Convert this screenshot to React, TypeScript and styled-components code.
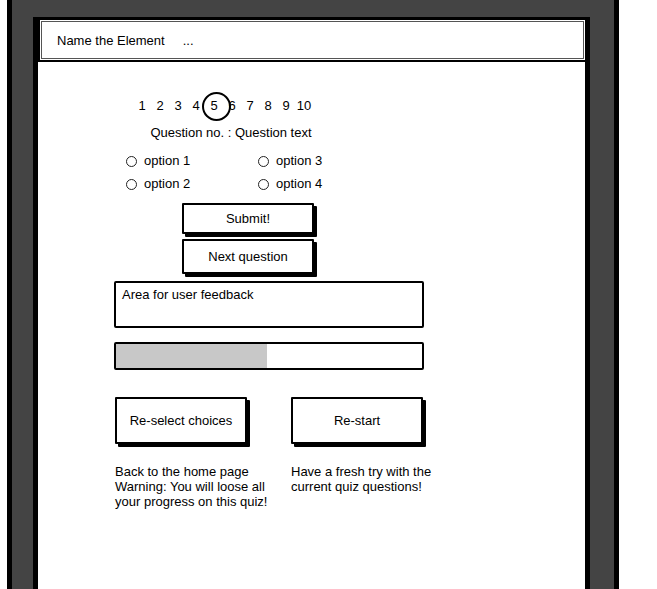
import React from "react";
import styled, { createGlobalStyle } from "styled-components";

const GlobalStyle = createGlobalStyle`
  html, body {
    margin: 0;
    padding: 0;
    background: #ffffff;
    overflow: hidden;
  }
  body {
    font-family: "Liberation Sans", Arial, sans-serif;
    font-size: 13px;
    color: #000;
  }
`;

const Device = styled.div`
  margin-left: 7px;
  width: 612px;
  height: 589px;
  box-sizing: border-box;
  border-left: 5px solid #000;
  border-right: 5px solid #000;
  background: #444444;
  padding: 17px 24px 0 21px;
`;

const Screen = styled.div`
  height: 100%;
  box-sizing: border-box;
  background: #ffffff;
  border-left: 5px solid #000;
  border-right: 5px solid #000;
  border-top: 1px solid #000;
  display: flex;
  flex-direction: column;
`;

const Header = styled.div`
  height: 44px;
  margin-right: -2px;
  box-sizing: border-box;
  border: 2px solid #000;
  box-shadow: inset 0 0 0 1px #fff, inset 0 0 0 2px #555;
  display: flex;
  align-items: center;
  gap: 18px;
  padding-left: 17px;
  font-size: 13px;
  background: #fff;
`;

const Main = styled.div`
  display: flex;
  flex-direction: column;
  align-items: flex-start;
  padding-left: 77px;
`;

const Pager = styled.div`
  display: flex;
  margin-top: 35px;
  margin-left: 18px;
  height: 18px;
  align-items: center;
`;

const PageNum = styled.span`
  position: relative;
  width: 18px;
  text-align: center;
  font-size: 13px;
  line-height: 18px;
`;

const Ring = styled.span`
  position: absolute;
  left: 50%;
  top: 50%;
  width: 25px;
  height: 25px;
  margin-left: -12px;
  margin-top: -14px;
  border: 2px solid #000;
  border-radius: 50%;
  pointer-events: none;
`;

const Question = styled.div`
  margin-top: 10px;
  width: 232px;
  text-align: center;
  line-height: 16px;
`;

const Options = styled.div`
  margin-top: 10px;
  margin-left: 11px;
  display: grid;
  grid-template-columns: 132px 132px;
  grid-auto-flow: column;
  grid-template-rows: 20px 20px;
  row-gap: 3px;
`;

const Option = styled.label`
  display: flex;
  align-items: center;
  gap: 7px;
  line-height: 20px;
`;

const Radio = styled.span`
  width: 9px;
  height: 9px;
  border: 1.4px solid #222;
  border-radius: 50%;
  display: inline-block;
`;

const SketchButton = styled.div<{ $h: number; $mt: number; $ml: number }>`
  box-sizing: border-box;
  width: 132px;
  height: ${(p) => p.$h}px;
  margin-top: ${(p) => p.$mt}px;
  margin-left: ${(p) => p.$ml}px;
  border: 2px solid #000;
  border-radius: 1px;
  box-shadow: 3px 3px 0 #000;
  background: #fff;
  display: flex;
  align-items: center;
  justify-content: center;
  font-size: 13px;
`;

const Feedback = styled.div`
  box-sizing: border-box;
  margin-top: 7px;
  width: 310px;
  margin-left: -1px;
  height: 47px;
  border: 2px solid #000;
  border-radius: 2px;
  padding: 4px 6px;
  line-height: 16px;
`;

const Progress = styled.div`
  box-sizing: border-box;
  margin-top: 14px;
  width: 310px;
  margin-left: -1px;
  height: 28px;
  border: 2px solid #000;
  border-radius: 2px;
  background: #fff;
  display: flex;
`;

const ProgressFill = styled.div`
  height: 100%;
  background: #c8c8c8;
`;

const ButtonRow = styled.div`
  margin-top: 27px;
  display: flex;
  gap: 44px;
`;

const Descriptions = styled.div`
  margin-top: 20px;
  display: grid;
  grid-template-columns: 176px 176px;
  line-height: 15px;
`;

const Desc = styled.p`
  margin: 0;
`;

const pages = [1, 2, 3, 4, 5, 6, 7, 8, 9, 10];

export default function App() {
  return (
    <>
      <GlobalStyle />
      <Device>
        <Screen>
          <Header>
            <span>Name the Element</span>
            <span>...</span>
          </Header>
          <Main>
            <Pager>
              {pages.map((n) => (
                <PageNum key={n}>
                  {n}
                  {n === 5 && <Ring />}
                </PageNum>
              ))}
            </Pager>
            <Question>Question no. : Question text</Question>
            <Options>
              <Option>
                <Radio />
                option 1
              </Option>
              <Option>
                <Radio />
                option 2
              </Option>
              <Option>
                <Radio />
                option 3
              </Option>
              <Option>
                <Radio />
                option 4
              </Option>
            </Options>
            <SketchButton $h={31} $mt={9} $ml={67}>
              Submit!
            </SketchButton>
            <SketchButton $h={35} $mt={5} $ml={67}>
              Next question
            </SketchButton>
            <Feedback>Area for user feedback</Feedback>
            <Progress>
              <ProgressFill style={{ width: "49.5%" }} />
            </Progress>
            <ButtonRow>
              <SketchButton $h={47} $mt={0} $ml={0}>
                Re-select choices
              </SketchButton>
              <SketchButton $h={47} $mt={0} $ml={0}>
                Re-start
              </SketchButton>
            </ButtonRow>
            <Descriptions>
              <Desc>
                Back to the home page
                <br />
                Warning: You will loose all
                <br />
                your progress on this quiz!
              </Desc>
              <Desc>
                Have a fresh try with the
                <br />
                current quiz questions!
              </Desc>
            </Descriptions>
          </Main>
        </Screen>
      </Device>
    </>
  );
}
